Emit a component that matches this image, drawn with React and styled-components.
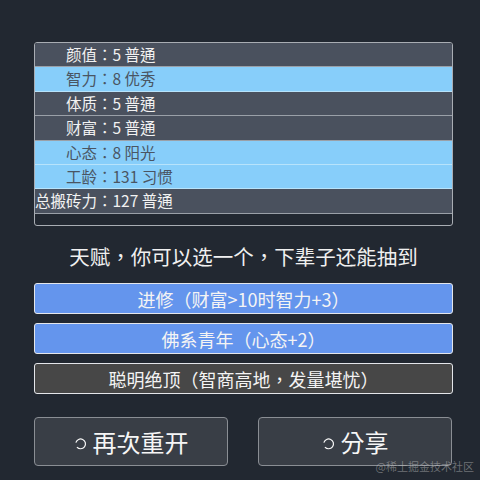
import styled, { createGlobalStyle } from "styled-components";

const GlobalStyle = createGlobalStyle`
  html, body {
    margin: 0;
    padding: 0;
    background: #222831;
  }
  body {
    font-family: "Noto Sans CJK TC", "Noto Sans CJK SC", "Noto Sans", sans-serif;
    color: #eeeeee;
  }
`;

const Page = styled.div`
  position: relative;
  width: 480px;
  height: 480px;
  box-sizing: border-box;
  padding: 42px 27px 0 34px;
  overflow: hidden;
`;

const PropList = styled.ul`
  list-style: none;
  margin: 0;
  padding: 0;
  height: 184px;
  box-sizing: border-box;
  border: 1px solid #a9adb3;
  border-radius: 3px;
  overflow: hidden;
`;

const PropRow = styled.li`
  display: flex;
  align-items: center;
  height: 24.4px;
  box-sizing: border-box;
  border-bottom: 1px solid ${(p) => (p.$good ? "#b7e3fb" : "#9aa0a8")};
  background: ${(p) => (p.$good ? "#87cefa" : "#4a515e")};
  color: ${(p) => (p.$good ? "#4a5563" : "#f2f2f2")};
  font-size: 15.5px;
  line-height: 1;

  .label {
    width: 62px;
    text-align: right;
    white-space: nowrap;
  }
`;

// full-width punctuation sits centred in its own em box, as in the original font
const Punct = styled.span`
  display: inline-block;
  width: 1em;
  text-align: center;
`;

const Title = styled.div`
  margin: 15px 0 12px;
  text-align: center;
  font-size: 20.5px;
  line-height: 30px;
  color: #f0f0f0;
`;

const TalentList = styled.div`
  display: flex;
  flex-direction: column;
  gap: 9px;
`;

const Talent = styled.div`
  height: 31px;
  box-sizing: border-box;
  border: 1.5px solid #e4e6ea;
  border-radius: 3px;
  background: ${(p) => (p.$grade === 0 ? "#474747" : "#6495ed")};
  display: flex;
  align-items: center;
  justify-content: center;
  font-size: 18px;
  color: #f4f4f4;
  white-space: pre;
`;

const Actions = styled.div`
  display: flex;
  gap: 30px;
  margin-top: 23px;
`;

const ActionButton = styled.div`
  width: 194px;
  height: 49px;
  box-sizing: border-box;
  border: 1px solid #8a8e94;
  border-radius: 4px;
  background: #393e46;
  display: flex;
  align-items: center;
  justify-content: center;
  gap: 6px;
  font-size: 24px;
  color: #f6f6f6;

  svg {
    margin-top: 3px;
  }
`;

const Watermark = styled.div`
  position: absolute;
  right: 6px;
  bottom: 6px;
  font-size: 11px;
  color: rgba(200, 200, 200, 0.45);
`;

const CycleIcon = () => (
  <svg width="13" height="13" viewBox="0 0 16 16">
    <path
      d="M3.6 12.4 A6 6 0 1 0 2.3 7"
      fill="none"
      stroke="#f6f6f6"
      strokeWidth="1.5"
    />
  </svg>
);

// wrap ，：（） so each keeps a full em of room
const withPunct = (text) =>
  text.split(/([，：（）])/).map((part, i) =>
    /^[，：（）]$/.test(part) ? <Punct key={i}>{part}</Punct> : part
  );

const props = [
  { label: "颜值", value: "5 普通" },
  { label: "智力", value: "8 优秀", good: true },
  { label: "体质", value: "5 普通" },
  { label: "财富", value: "5 普通" },
  { label: "心态", value: "8 阳光", good: true },
  { label: "工龄", value: "131 习惯", good: true },
  { label: "总搬砖力", value: "127 普通" },
];

const talents = [
  { name: "进修（财富>10时智力+3）", grade: 1 },
  { name: "佛系青年（心态+2）", grade: 1 },
  { name: "聪明绝顶（智商高地，发量堪忧）", grade: 0 },
];

export default function App() {
  return (
    <>
      <GlobalStyle />
      <Page>
        <PropList>
          {props.map((p) => (
            <PropRow key={p.label} $good={p.good}>
              <span className="label">{p.label}</span>
              <span>
                <Punct>：</Punct>
                {p.value}
              </span>
            </PropRow>
          ))}
        </PropList>
        <Title>{withPunct("天赋，你可以选一个，下辈子还能抽到")}</Title>
        <TalentList>
          {talents.map((t) => (
            <Talent key={t.name} $grade={t.grade}>
              {withPunct(t.name)}
            </Talent>
          ))}
        </TalentList>
        <Actions>
          <ActionButton>
            <CycleIcon />
            再次重开
          </ActionButton>
          <ActionButton>
            <CycleIcon />
            分享
          </ActionButton>
        </Actions>
        <Watermark>@稀土掘金技术社区</Watermark>
      </Page>
    </>
  );
}
